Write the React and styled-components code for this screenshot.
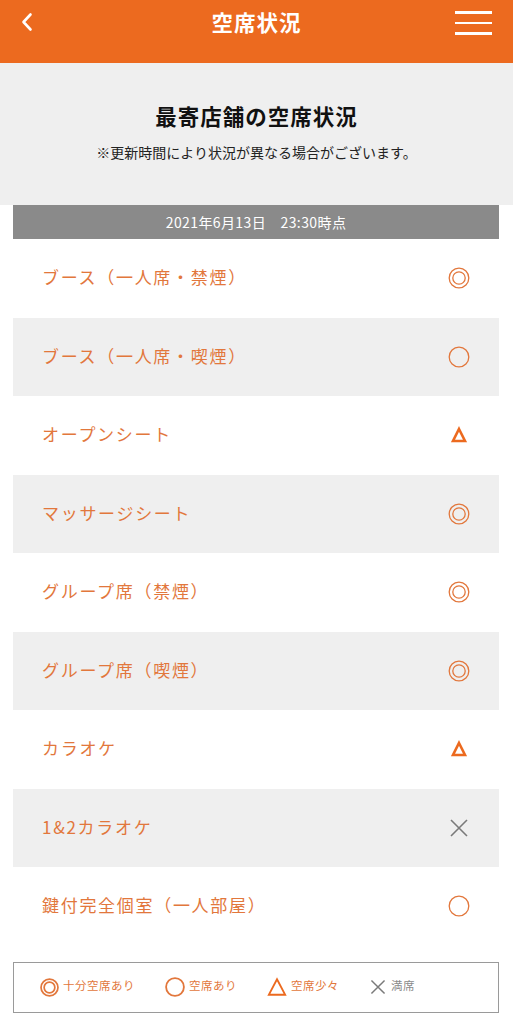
import styled, { createGlobalStyle } from "styled-components";

const ORANGE = "#ec6a1f";
const TEXT_ORANGE = "#e2773c";

const GlobalStyle = createGlobalStyle`
  body {
    margin: 0;
    background: #ffffff;
    font-family: "Noto Sans CJK JP", "Noto Sans", sans-serif;
  }
`;

const seats = [
  { name: "ブース（一人席・禁煙）", status: "plenty" },
  { name: "ブース（一人席・喫煙）", status: "some" },
  { name: "オープンシート", status: "few" },
  { name: "マッサージシート", status: "plenty" },
  { name: "グループ席（禁煙）", status: "plenty" },
  { name: "グループ席（喫煙）", status: "plenty" },
  { name: "カラオケ", status: "few" },
  { name: "1&2カラオケ", status: "full" },
  { name: "鍵付完全個室（一人部屋）", status: "some" },
];

function StatusIcon({ status, size = 22, bold = false }) {
  const w = bold ? 2 : 1.3;
  if (status === "plenty") {
    return (
      <svg width={size} height={size} viewBox="0 0 22 22">
        <circle cx="11" cy="11" r="9.8" fill="none" stroke={TEXT_ORANGE} strokeWidth={w} />
        <circle cx="11" cy="11" r="6.2" fill="none" stroke={TEXT_ORANGE} strokeWidth={w} />
      </svg>
    );
  }
  if (status === "some") {
    return (
      <svg width={size} height={size} viewBox="0 0 22 22">
        <circle cx="11" cy="11" r="9.8" fill="none" stroke={TEXT_ORANGE} strokeWidth={w} />
      </svg>
    );
  }
  if (status === "few") {
    return bold ? (
      <svg width={size} height={size} viewBox="0 0 22 22">
        <polygon points="11,2.5 20,19.5 2,19.5" fill="none" stroke={ORANGE} strokeWidth="2" strokeLinejoin="miter" />
      </svg>
    ) : (
      <svg width={size} height={size} viewBox="0 0 22 22">
        <polygon points="11,5 17,17 5,17" fill="none" stroke={ORANGE} strokeWidth="2.6" strokeLinejoin="miter" />
      </svg>
    );
  }
  return (
    <svg width={size} height={size} viewBox="0 0 22 22">
      <path d="M3 3 L19 19 M19 3 L3 19" stroke="#7a7a7a" strokeWidth={bold ? 1.8 : 1.6} fill="none" />
    </svg>
  );
}

export default function App() {
  return (
    <Page>
      <GlobalStyle />
      <Header>
        <BackButton>
          <svg width="14" height="22" viewBox="0 0 14 22">
            <path d="M10.5 3.5 L3.5 11 L10.5 18.5" stroke="#fff" strokeWidth="2.6" fill="none" strokeLinecap="round" strokeLinejoin="round" />
          </svg>
        </BackButton>
        <HeaderTitle>空席状況</HeaderTitle>
        <MenuButton>
          <MenuLine />
          <MenuLine />
          <MenuLine />
        </MenuButton>
      </Header>
      <Intro>
        <IntroTitle>最寄店舗の空席状況</IntroTitle>
        <IntroNote>※更新時間により状況が異なる場合がございます。</IntroNote>
      </Intro>
      <Content>
        <DateBar>2021年6月13日　23:30時点</DateBar>
        <SeatList>
          {seats.map((seat, i) => (
            <SeatRow key={seat.name} $shaded={i % 2 === 1}>
              <SeatName>{seat.name}</SeatName>
              <IconCell>
                <StatusIcon status={seat.status} />
              </IconCell>
            </SeatRow>
          ))}
        </SeatList>
        <Legend>
          <LegendItem>
            <StatusIcon status="plenty" size={19} bold />
            <LegendText>十分空席あり</LegendText>
          </LegendItem>
          <LegendItem>
            <StatusIcon status="some" size={20} bold />
            <LegendText>空席あり</LegendText>
          </LegendItem>
          <LegendItem>
            <StatusIcon status="few" size={20} bold />
            <LegendText>空席少々</LegendText>
          </LegendItem>
          <LegendItem>
            <StatusIcon status="full" size={18} bold />
            <LegendText $gray>満席</LegendText>
          </LegendItem>
        </Legend>
      </Content>
    </Page>
  );
}

const Page = styled.div`
  width: 513px;
  min-height: 1024px;
  background: #fff;
`;

const Header = styled.header`
  height: 63px;
  background: ${ORANGE};
  display: grid;
  grid-template-columns: 60px 1fr 60px;
  align-items: start;
  padding-top: 8px;
  box-sizing: border-box;
`;

const BackButton = styled.div`
  display: flex;
  padding-left: 20px;
  padding-top: 3px;
`;

const HeaderTitle = styled.h1`
  margin: 0;
  text-align: center;
  color: #fff;
  font-size: 21.5px;
  font-weight: 700;
  line-height: 28px;
  letter-spacing: 1px;
`;

const MenuButton = styled.div`
  display: flex;
  flex-direction: column;
  gap: 8px;
  padding-top: 3px;
  padding-right: 21px;
  align-items: flex-end;
`;

const MenuLine = styled.span`
  display: block;
  width: 37px;
  height: 2.6px;
  background: #fff;
`;

const Intro = styled.section`
  height: 142px;
  background: #efefef;
  display: flex;
  flex-direction: column;
  align-items: center;
  padding-top: 38px;
  box-sizing: border-box;
`;

const IntroTitle = styled.h2`
  margin: 0;
  font-size: 21.5px;
  font-weight: 700;
  color: #111;
  line-height: 30px;
  letter-spacing: 1px;
`;

const IntroNote = styled.p`
  margin: 11px 0 0;
  font-size: 14px;
  color: #222;
  line-height: 20px;
`;

const Content = styled.main`
  padding: 0 14px 0 13px;
`;

const DateBar = styled.div`
  height: 34px;
  background: #8a8a8a;
  color: #fff;
  font-size: 14px;
  display: flex;
  align-items: center;
  justify-content: center;
  letter-spacing: 0.4px;
`;

const SeatList = styled.ul`
  list-style: none;
  margin: 0;
  padding: 0;
`;

const SeatRow = styled.li`
  height: 78.5px;
  display: flex;
  align-items: center;
  justify-content: space-between;
  padding: 0 29px 0 29px;
  background: ${(p) => (p.$shaded ? "#efefef" : "#fff")};
`;

const SeatName = styled.span`
  color: ${TEXT_ORANGE};
  font-size: 17px;
  letter-spacing: 1.7px;
  margin-top: -3px;
`;

const IconCell = styled.span`
  display: flex;
  width: 22px;
  height: 22px;
`;

const Legend = styled.div`
  margin-top: 16px;
  height: 51px;
  border: 1.5px solid #9a9a9a;
  box-sizing: border-box;
  display: flex;
  align-items: center;
  padding-left: 26px;
  gap: 30px;
`;

const LegendItem = styled.div`
  display: flex;
  align-items: center;
  gap: 4px;
`;

const LegendText = styled.span`
  font-size: 11.5px;
  color: ${(p) => (p.$gray ? "#8a8a8a" : TEXT_ORANGE)};
  letter-spacing: 0.5px;
  margin-top: -5px;
`;
